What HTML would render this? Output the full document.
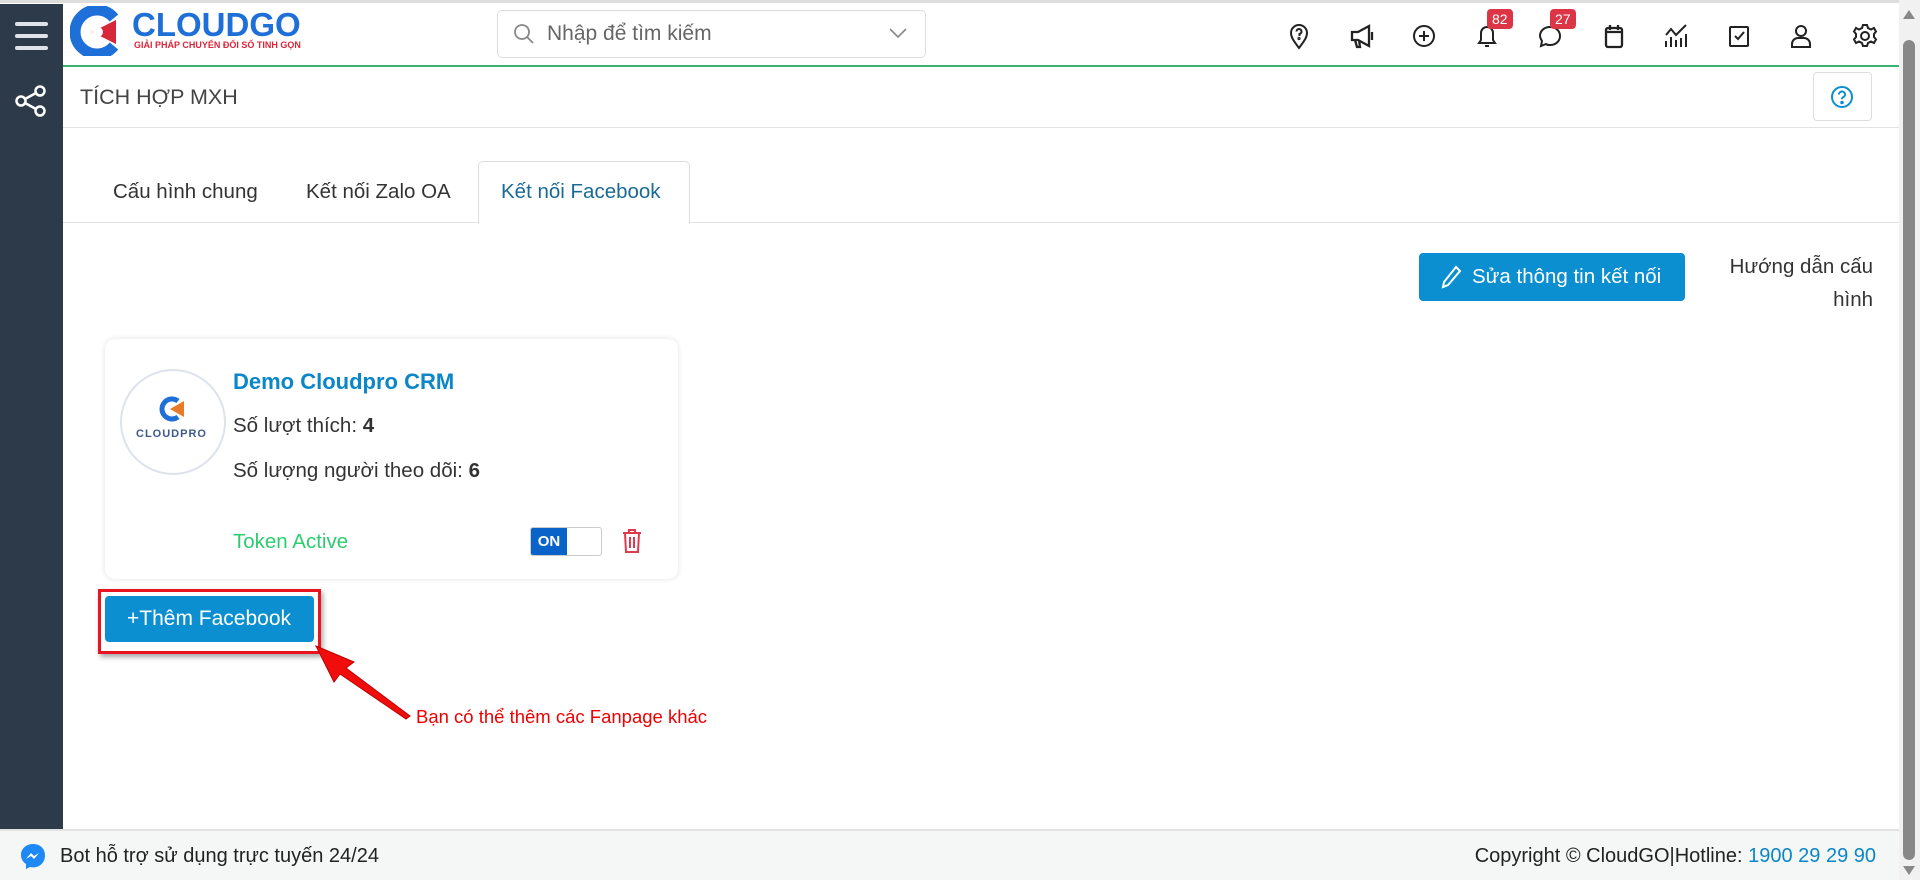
<!DOCTYPE html>
<html><head><meta charset="utf-8"><style>
*{box-sizing:border-box;margin:0;padding:0}
body{width:1920px;height:880px;overflow:hidden;background:#fff;font-family:"Liberation Sans",sans-serif;color:#333;position:relative}
.abs{position:absolute}
.sidebar{left:0;top:4px;width:63px;height:825px;background:#2c3a4a}
.topline{left:0;top:0;width:1920px;height:3px;background:#ddd}
.green{left:63px;top:65px;width:1836px;height:2px;background:#3bb273}
.ico{position:absolute;top:22px;width:28px;height:28px}
.badge{position:absolute;top:9px;background:#dc3545;color:#fff;font-size:14px;border-radius:4px;padding:1px 5px;line-height:18px}
.tab{position:absolute;top:180px;font-size:20.5px;color:#333}
.txt{font-size:20.5px;color:#333}
</style></head><body>
<div class="abs topline"></div>
<div class="abs sidebar">
  <div class="abs" style="left:15px;top:18px;width:33px;height:4px;background:#dfe3e8;border-radius:2px"></div>
  <div class="abs" style="left:15px;top:30px;width:33px;height:4px;background:#dfe3e8;border-radius:2px"></div>
  <div class="abs" style="left:15px;top:42px;width:33px;height:4px;background:#dfe3e8;border-radius:2px"></div>
  <svg class="abs" style="left:14px;top:80px" width="34" height="34" viewBox="0 0 34 34" fill="none" stroke="#fff" stroke-width="2.5"><circle cx="26" cy="7" r="4.5"/><circle cx="7" cy="17" r="4.5"/><circle cx="26" cy="27" r="4.5"/><path d="M11 15 L22 9 M11 19 L22 25"/></svg>
</div>
<svg class="abs" style="left:70px;top:6px" width="60" height="50" viewBox="0 0 60 50"><path d="M44 12 A22 22 0 1 0 44 40" fill="none" stroke="#1f6fd8" stroke-width="11"/><path d="M22 26 L46 14 L46 38 Z" fill="#d8263b"/><circle cx="28" cy="26" r="5" fill="#fff"/></svg>
<div class="abs" style="left:132px;top:6px;font-size:33px;font-weight:bold;color:#1f6fd8">CLOUDGO</div>
<div class="abs" style="left:134px;top:40px;font-size:9px;font-weight:bold;color:#d8263b">GIẢI PHÁP CHUYỂN ĐỔI SỐ TINH GỌN</div>
<div class="abs" style="left:497px;top:10px;width:429px;height:48px;border:1px solid #ddd;border-radius:5px"></div>
<svg class="abs" style="left:512px;top:22px" width="24" height="24" viewBox="0 0 24 24" fill="none" stroke="#888" stroke-width="1.8"><circle cx="10" cy="10" r="7"/><path d="M15 15l6 6"/></svg>
<div class="abs" style="left:547px;top:22px;font-size:21px;color:#666">Nhập để tìm kiếm</div>
<svg class="abs" style="left:888px;top:26px" width="20" height="14" viewBox="0 0 20 14" fill="none" stroke="#888" stroke-width="1.6"><path d="M2 3l8 8 8-8"/></svg>
<svg class="ico" style="left:1285px" viewBox="0 0 28 28" fill="none" stroke="#222" stroke-width="2"><path d="M14 26 C8 18 6 15 6 11 a8 8 0 0 1 16 0 c0 4-2 7-8 15z"/><path d="M11.5 9.5a2.5 2.5 0 1 1 3 2.4V14"/><circle cx="14" cy="16.5" r=".6"/></svg>
<svg class="ico" style="left:1348px" viewBox="0 0 28 28" fill="none" stroke="#222" stroke-width="2.3"><path d="M4 10h6l11-6v20l-11-6H4z M7 18l2 7h3l-1-7 M24 10v8"/></svg>
<svg class="ico" style="left:1410px" viewBox="0 0 28 28" fill="none" stroke="#222" stroke-width="2"><circle cx="14" cy="14" r="10"/><path d="M14 9v10M9 14h10"/></svg>
<svg class="ico" style="left:1473px" viewBox="0 0 28 28" fill="none" stroke="#222" stroke-width="2"><path d="M6 21h16l-2-3v-7a6 6 0 0 0-12 0v7z M12 24h4"/></svg>
<div class="badge" style="left:1487px">82</div>
<svg class="ico" style="left:1536px" viewBox="0 0 28 28" fill="none" stroke="#222" stroke-width="2"><path d="M14 5c6 0 10 4 10 9s-4 9-10 9c-2 0-3 0-4-1l-5 2 1-5c-1-2-2-3-2-5 0-5 4-9 10-9z"/></svg>
<div class="badge" style="left:1550px">27</div>
<svg class="ico" style="left:1600px" viewBox="0 0 28 28" fill="none" stroke="#222" stroke-width="2.3"><rect x="6" y="6" width="16" height="19" rx="2"/><path d="M6 10h16M10 3v5M18 3v5" /></svg>
<svg class="ico" style="left:1662px" viewBox="0 0 28 28" fill="none" stroke="#222" stroke-width="2"><path d="M4 25v-6M9 25v-10M14 25v-7M19 25v-9M24 25v-13M4 13l5-6 5 6 5-5 5-5"/></svg>
<svg class="ico" style="left:1725px" viewBox="0 0 28 28" fill="none" stroke="#222" stroke-width="2"><rect x="5" y="5" width="18" height="19" rx="1"/><path d="M10 14l3 3 6-7"/></svg>
<svg class="ico" style="left:1787px" viewBox="0 0 28 28" fill="none" stroke="#222" stroke-width="2"><circle cx="14" cy="9" r="5"/><path d="M5 25v-3a6 6 0 0 1 6-6h6a6 6 0 0 1 6 6v3z"/></svg>
<svg class="ico" style="left:1851px" viewBox="0 0 28 28" fill="none" stroke="#222" stroke-width="2"><circle cx="14" cy="14" r="4"/><path d="M12 3h4l1 3 3 1.5 3-1.5 2 3.5-2 2.5v3l2 2.5-2 3.5-3-1.5-3 1.5-1 3h-4l-1-3-3-1.5-3 1.5-2-3.5 2-2.5v-3l-2-2.5 2-3.5 3 1.5 3-1.5z"/></svg>
<div class="abs green"></div>
<div class="abs" style="left:80px;top:85px;font-size:21.5px;color:#444">TÍCH HỢP MXH</div>
<div class="abs" style="left:1813px;top:72px;width:59px;height:49px;border:1px solid #ddd;border-radius:4px"></div>
<svg class="abs" style="left:1830px;top:85px" width="24" height="24" viewBox="0 0 24 24" fill="none" stroke="#0b8fd0" stroke-width="2"><circle cx="12" cy="12" r="10"/><path d="M9 9.5a3 3 0 1 1 4 2.8c-.8.4-1 1-1 2"/><circle cx="12" cy="17.5" r=".8" fill="#0b8fd0"/></svg>
<div class="abs" style="left:63px;top:127px;width:1836px;height:1px;background:#e3e3e3"></div>
<div class="abs" style="left:478px;top:161px;width:212px;height:63px;border:1px solid #ddd;border-bottom:1px solid #fff;border-radius:5px 5px 0 0;background:#fff;z-index:2"></div>
<div class="abs" style="left:63px;top:222px;width:1836px;height:1px;background:#e3e3e3"></div>
<div class="tab" style="left:113px">Cấu hình chung</div>
<div class="tab" style="left:306px">Kết nối Zalo OA</div>
<div class="tab" style="left:501px;color:#1a6a96;z-index:3">Kết nối Facebook</div>
<div class="abs" style="left:1419px;top:253px;width:266px;height:48px;background:#0b8fd0;border-radius:4px;color:#fff;font-size:20.5px;line-height:48px;padding-left:53px">Sửa thông tin kết nối</div>
<svg class="abs" style="left:1440px;top:265px" width="22" height="24" viewBox="0 0 22 24" fill="none" stroke="#fff" stroke-width="2"><path d="M16 2l4 4L8 20l-5 2 1-5z"/></svg>
<div class="abs" style="left:1690px;top:250px;width:183px;text-align:right;font-size:20.5px;line-height:33px;color:#333">Hướng dẫn cấu hình</div>
<div class="abs" style="left:105px;top:339px;width:573px;height:240px;border-radius:10px;box-shadow:0 0 6px rgba(0,0,0,.12);background:#fff"></div>
<div class="abs" style="left:120px;top:369px;width:106px;height:106px;border-radius:50%;border:2px solid #dde3ea;background:#fff"></div>
<svg class="abs" style="left:150px;top:393px" width="46" height="32" viewBox="0 0 46 32"><path d="M28 8 A10 10 0 1 0 28 24" fill="none" stroke="#1f6fd8" stroke-width="5"/><path d="M20 16 L34 8 L34 24Z" fill="#e87a2a"/></svg>
<div class="abs" style="left:136px;top:428px;font-size:11px;font-weight:bold;color:#3d5a8a;letter-spacing:1px">CLOUDPRO</div>
<div class="abs" style="left:233px;top:369px;font-size:22px;color:#0b86c8;font-weight:bold">Demo Cloudpro CRM</div>
<div class="abs txt" style="left:233px;top:414px">Số lượt thích: <b>4</b></div>
<div class="abs txt" style="left:233px;top:459px">Số lượng người theo dõi: <b>6</b></div>
<div class="abs" style="left:233px;top:530px;font-size:20.5px;color:#2ecc71">Token Active</div>
<div class="abs" style="left:530px;top:527px;width:72px;height:29px;border:1px solid #ccc;border-radius:3px;overflow:hidden"><div style="width:36px;height:100%;background:#0a63c9;color:#fff;font-size:15px;font-weight:bold;line-height:27px;text-align:center">ON</div></div>
<svg class="abs" style="left:621px;top:528px" width="22" height="26" viewBox="0 0 22 26" fill="none" stroke="#e03a4e" stroke-width="2"><path d="M2 5h18M8 5V2h6v3M4 5l1 19h12l1-19M9 9v11M13 9v11"/></svg>
<div class="abs" style="left:98px;top:589px;width:223px;height:65px;border:3px solid #e8141f;box-shadow:2px 3px 5px rgba(0,0,0,.35)"></div>
<div class="abs" style="left:105px;top:596px;width:209px;height:46px;background:#0b8fd0;border-radius:4px;color:#fff;font-size:21px;line-height:46px;padding-left:22px">+Thêm Facebook</div>
<svg class="abs" style="left:310px;top:640px" width="110" height="80" viewBox="0 0 110 80"><path d="M6 6 L44 22 L36 28 L100 76 L96 79 L30 34 L24 42 Z" fill="#f20d0d" stroke="#b00" stroke-width="1"/></svg>
<div class="abs" style="left:416px;top:706px;font-size:18.5px;color:#e00">Bạn có thể thêm các Fanpage khác</div>
<div class="abs" style="left:0;top:829px;width:1899px;height:51px;background:#f5f7f7;border-top:2px solid #e2e2e2"></div>
<svg class="abs" style="left:20px;top:843px" width="26" height="26" viewBox="0 0 26 26"><path d="M13 1C6 1 1 6 1 12c0 4 2 7 5 9v5l4-2c1 .3 2 .4 3 .4 7 0 12-5 12-12S20 1 13 1z" fill="#1e88f5"/><path d="M6 16l5-6 3 3 5-3-5 6-3-3z" fill="#fff"/></svg>
<div class="abs" style="left:60px;top:845px;font-size:20px;color:#222">Bot hỗ trợ sử dụng trực tuyến 24/24</div>
<div class="abs" style="right:44px;top:845px;font-size:20px;color:#222">Copyright © CloudGO|Hotline: <span style="color:#0b86c8">1900 29 29 90</span></div>
<div class="abs" style="left:1899px;top:0;width:21px;height:880px;background:#f1f1f1"></div>
<div class="abs" style="left:1903px;top:40px;width:12px;height:820px;background:#888;border-radius:6px"></div>
<div class="abs" style="left:1903px;top:10px;width:0;height:0;border-left:6px solid transparent;border-right:6px solid transparent;border-bottom:9px solid #888"></div>
<div class="abs" style="left:1903px;top:866px;width:0;height:0;border-left:6px solid transparent;border-right:6px solid transparent;border-top:9px solid #888"></div>
</body></html>
